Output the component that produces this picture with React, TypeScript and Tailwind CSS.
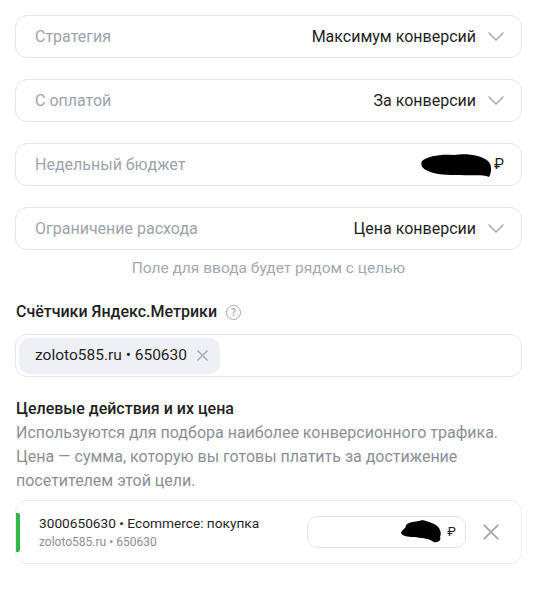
import { ReactNode } from "react";

const font = { fontFamily: "Roboto, 'Noto Sans', sans-serif" };

const Chevron = () => (
  <svg width="16" height="9" viewBox="0 0 16 9" fill="none" className="shrink-0">
    <path d="M1 1l7 7 7-7" stroke="#a3a8b4" strokeWidth="1.5" strokeLinecap="round" strokeLinejoin="round" />
  </svg>
);

const Cross = ({ size = 12, color = "#a3a8b4", w = 1.6 }: { size?: number; color?: string; w?: number }) => (
  <svg width={size} height={size} viewBox="0 0 12 12" fill="none" className="shrink-0">
    <path d="M1 1l10 10M11 1L1 11" stroke={color} strokeWidth={w} strokeLinecap="round" />
  </svg>
);

// закрашенная сумма в скриншоте
const Blob = ({ w, h, d }: { w: number; h: number; d: string }) => (
  <svg width={w} height={h} viewBox={`0 0 ${w} ${h}`} className="shrink-0">
    <path d={d} fill="#000" />
  </svg>
);

const Field = ({ label, children }: { label: string; children?: ReactNode }) => (
  <div className="flex h-[43px] items-center justify-between rounded-[12px] border border-[#e4e6ee] bg-white pl-[19px] pr-[17px]">
    <span className="text-[16px] text-[#9ea3ae]">{label}</span>
    <div className="flex items-center gap-[12px]">{children}</div>
  </div>
);

const Select = ({ label, value }: { label: string; value: string }) => (
  <Field label={label}>
    <span className="text-[16px] text-[#1f1f1f]">{value}</span>
    <Chevron />
  </Field>
);

export default function App() {
  return (
    <div className="min-h-screen bg-white px-[15px] pt-[15px]" style={font}>
      <div className="w-[507px]">
        <div className="flex flex-col gap-[21px]">
          <Select label="Стратегия" value="Максимум конверсий" />
          <Select label="С оплатой" value="За конверсии" />
          <Field label="Недельный бюджет">
            <div className="flex items-center gap-[2px]">
              <Blob w={72} h={26} d="M2 9C8 4 20 2 34 3C48 1 62 4 68 9C72 13 72 20 69 25C62 22 52 24 40 23C28 23 16 23 8 19C2 17 0 12 2 9Z" />
              <span className="text-[15px] text-[#1f1f1f]">₽</span>
            </div>
          </Field>
          <Select label="Ограничение расхода" value="Цена конверсии" />
        </div>
        <p className="mt-[8px] text-center text-[15.5px] leading-[20px] text-[#a3a8b4]">
          Поле для ввода будет рядом с целью
        </p>

        <div className="mt-[22px] flex items-center gap-[9px] pl-px">
          <h3 className="text-[16px] font-medium leading-[24px] text-[#1f1f1f]">Счётчики Яндекс.Метрики</h3>
          <span className="flex h-[15px] w-[15px] items-center justify-center rounded-full border-[1.5px] border-[#a3a8b4] text-[10px] font-medium text-[#a3a8b4]">
            ?
          </span>
        </div>
        <div className="mt-[10px] flex h-[43px] items-center rounded-[12px] border border-[#e4e6ee] px-[3px]">
          <div className="flex h-[36px] items-center gap-[10px] rounded-[10px] bg-[#eef0f5] pl-[16px] pr-[12px]">
            <span className="text-[15.5px] text-[#1f1f1f]">zoloto585.ru • 650630</span>
            <Cross size={11} />
          </div>
        </div>

        <h3 className="mt-[20px] pl-px text-[16px] font-medium leading-[24px] text-[#1f1f1f]">
          Целевые действия и их цена
        </h3>
        <p className="pl-px text-[16px] leading-[24px] text-[#8c8f96]">
          Используются для подбора наиболее конверсионного трафика. Цена — сумма, которую вы готовы платить за
          достижение посетителем этой цели.
        </p>

        <div className="mt-[7px] flex h-[64px] items-center rounded-[12px] border border-[#eceef3]">
          <div className="h-[39px] w-[4px] rounded-r-[2px] bg-[#33b74a]" />
          <div className="ml-[19px] flex flex-1 flex-col">
            <span className="text-[13.7px] leading-[19px] text-[#1f1f1f]">3000650630 • Ecommerce: покупка</span>
            <span className="text-[12px] leading-[18px] text-[#8c8f96]">zoloto585.ru • 650630</span>
          </div>
          <div className="flex h-[32px] w-[159px] items-center justify-end gap-[4px] rounded-[10px] border border-[#e4e6ee] pr-[9px]">
            <Blob w={43} h={26} d="M6 6C10 2 18 3 22 1C28 2 32 4 36 6C40 9 42 14 40 18C42 22 36 25 32 22C28 19 20 19 14 18C8 18 2 17 1 14C2 10 6 10 6 6Z" />
            <span className="text-[13px] text-[#1f1f1f]">₽</span>
          </div>
          <div className="ml-[17px] mr-[22px]">
            <Cross size={16} w={1.5} />
          </div>
        </div>
      </div>
    </div>
  );
}
